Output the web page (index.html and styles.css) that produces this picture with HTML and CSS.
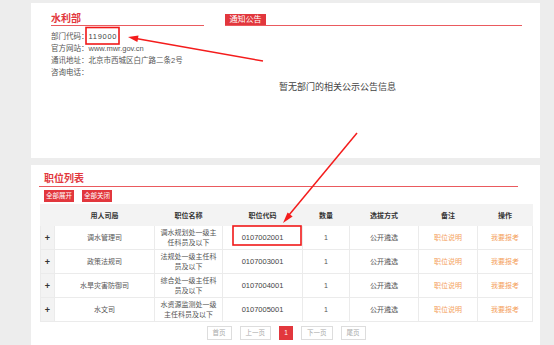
FILE: index.html
```html
<!DOCTYPE html>
<html lang="zh">
<head>
<meta charset="utf-8">
<link rel="stylesheet" href="styles.css">
</head>
<body>
<div class="wrap">
  <div class="panel top">
    <div class="left">
      <div class="sec-head"><span class="title">水利部</span></div>
      <div class="info">
        <div>部门代码：<span class="code">119000</span></div>
        <div>官方网站：www.mwr.gov.cn</div>
        <div>通讯地址：北京市西城区白广路二条2号</div>
        <div>咨询电话：</div>
      </div>
    </div>
    <div class="right">
      <div class="sec-head"><span class="tab">通知公告</span></div>
      <div class="empty">暂无部门的相关公示公告信息</div>
    </div>
  </div>

  <div class="panel list">
    <div class="list-head"><span class="title">职位列表</span></div>
    <div class="btns">
      <span class="btn">全部展开</span>
      <span class="btn">全部关闭</span>
    </div>
    <table class="jobs">
      <colgroup>
        <col class="c-plus"><col class="c-dept"><col class="c-name"><col class="c-code"><col class="c-num"><col class="c-way"><col class="c-note"><col class="c-op">
      </colgroup>
      <thead>
        <tr><th></th><th>用人司局</th><th>职位名称</th><th>职位代码</th><th>数量</th><th>选拔方式</th><th>备注</th><th>操作</th></tr>
      </thead>
      <tbody>
        <tr><td class="plus">+</td><td>调水管理司</td><td class="name">调水规划处一级主任科员及以下</td><td class="num-code">0107002001</td><td>1</td><td>公开遴选</td><td class="link">职位说明</td><td class="link">我要报考</td></tr>
        <tr><td class="plus">+</td><td>政策法规司</td><td class="name">法规处一级主任科员及以下</td><td class="num-code">0107003001</td><td>1</td><td>公开遴选</td><td class="link">职位说明</td><td class="link">我要报考</td></tr>
        <tr><td class="plus">+</td><td>水旱灾害防御司</td><td class="name">综合处一级主任科员及以下</td><td class="num-code">0107004001</td><td>1</td><td>公开遴选</td><td class="link">职位说明</td><td class="link">我要报考</td></tr>
        <tr><td class="plus">+</td><td>水文司</td><td class="name">水资源监测处一级主任科员及以下</td><td class="num-code">0107005001</td><td>1</td><td>公开遴选</td><td class="link">职位说明</td><td class="link">我要报考</td></tr>
      </tbody>
    </table>
    <div class="pager">
      <span class="pg">首页</span>
      <span class="pg">上一页</span>
      <span class="pg cur">1</span>
      <span class="pg">下一页</span>
      <span class="pg">尾页</span>
    </div>
  </div>
</div>

<svg class="annot" width="554" height="345" viewBox="0 0 554 345">
  <rect x="86" y="27.5" width="33" height="16.5" fill="none" stroke="#f01818" stroke-width="1.6"/>
  <rect x="233" y="226" width="68" height="19" fill="none" stroke="#f01818" stroke-width="1.6"/>
  <line x1="263" y1="61" x2="136" y2="38.5" stroke="#f41c1c" stroke-width="1.5"/>
  <polygon points="128,37 137.4,41.9 138.5,35.6" fill="#f41c1c"/>
  <line x1="357" y1="133" x2="289" y2="215" stroke="#f41c1c" stroke-width="1.5"/>
  <polygon points="283,223 292.6,216.6 287.6,212.4" fill="#f41c1c"/>
</svg>
</body>
</html>
```
FILE: styles.css
```css
* { box-sizing: border-box; }
html, body { margin: 0; padding: 0; }
body {
  background: #ededed;
  font-family: "Liberation Sans", "Noto Sans CJK SC", sans-serif;
  width: 554px;
  height: 345px;
  overflow: hidden;
  position: relative;
}
.wrap { padding: 3px 0 0 31px; }
.panel { width: 509px; background: #fff; }

.top {
  height: 155px;
  padding: 10px 18px 0 20px;
  display: flex;
  gap: 21px;
}
.left { width: 153px; }
.right { flex: 1; }
.sec-head {
  height: 13px;
  border-bottom: 1px solid #ea5a5e;
  display: flex;
  align-items: flex-end;
}
.title {
  font-size: 10px;
  font-weight: bold;
  color: #e2373d;
  line-height: 13px;
}
.tab {
  background: #e2373d;
  color: #fff;
  font-size: 8px;
  line-height: 11px;
  height: 11px;
  padding: 0 4.5px;
}
.info {
  margin-top: 5px;
  font-size: 7.5px;
  line-height: 12px;
  color: #555;
}
.code { letter-spacing: 0.7px; color: #444; }
.empty {
  margin-top: 54px;
  padding-left: 54px;
  font-size: 9px;
  line-height: 14px;
  color: #444;
}

.list {
  margin-top: 7px;
  height: 180px;
  padding: 7px 8px 0 8px;
}
.list-head {
  width: 479px;
  height: 15px;
  border-bottom: 1px solid #ea5a5e;
  padding-left: 5px;
  display: flex;
  align-items: center;
}
.list-head .title { line-height: 14px; }
.btns {
  margin-top: 3px;
  padding-left: 5px;
  display: flex;
  gap: 8px;
}
.btn {
  width: 30px;
  height: 12px;
  background: #e2373d;
  color: #fff;
  font-size: 6.5px;
  line-height: 12px;
  text-align: center;
}
.jobs {
  margin: 2px 0 0 1px;
  width: 492px;
  border-collapse: collapse;
  table-layout: fixed;
  font-size: 7px;
  color: #555;
}
.c-plus { width: 14px; }
.c-dept { width: 100px; }
.c-name { width: 68px; }
.c-code { width: 80px; }
.c-num { width: 47px; }
.c-way { width: 69px; }
.c-note { width: 59px; }
.c-op { width: 55px; }
.jobs th {
  height: 21px;
  background: #f3f3f3;
  font-weight: bold;
  color: #333;
  padding: 0;
  border: 1px solid #f3f3f3;
}
.jobs td {
  height: 24px;
  padding: 0 4px;
  text-align: center;
  border: 1px solid #ebebeb;
  line-height: 10px;
}
.jobs td.plus {
  background: #f3f3f3;
  color: #333;
  font-size: 9px;
  font-weight: bold;
  padding: 0;
}
.jobs td.num-code { font-size: 7.5px; color: #444; }
.jobs td.link { color: #f4a15c; }

.pager {
  width: 492px;
  margin: 4px 0 0 1px;
  display: flex;
  justify-content: center;
  gap: 8px;
}
.pg {
  height: 14px;
  padding: 0 5px;
  border: 1px solid #ddd;
  color: #aaa;
  font-size: 6.5px;
  line-height: 12px;
}
.pg.cur {
  width: 14px;
  padding: 0;
  text-align: center;
  background: #e2373d;
  border-color: #e2373d;
  color: #fff;
}
.annot {
  position: absolute;
  left: 0;
  top: 0;
  pointer-events: none;
}
```
